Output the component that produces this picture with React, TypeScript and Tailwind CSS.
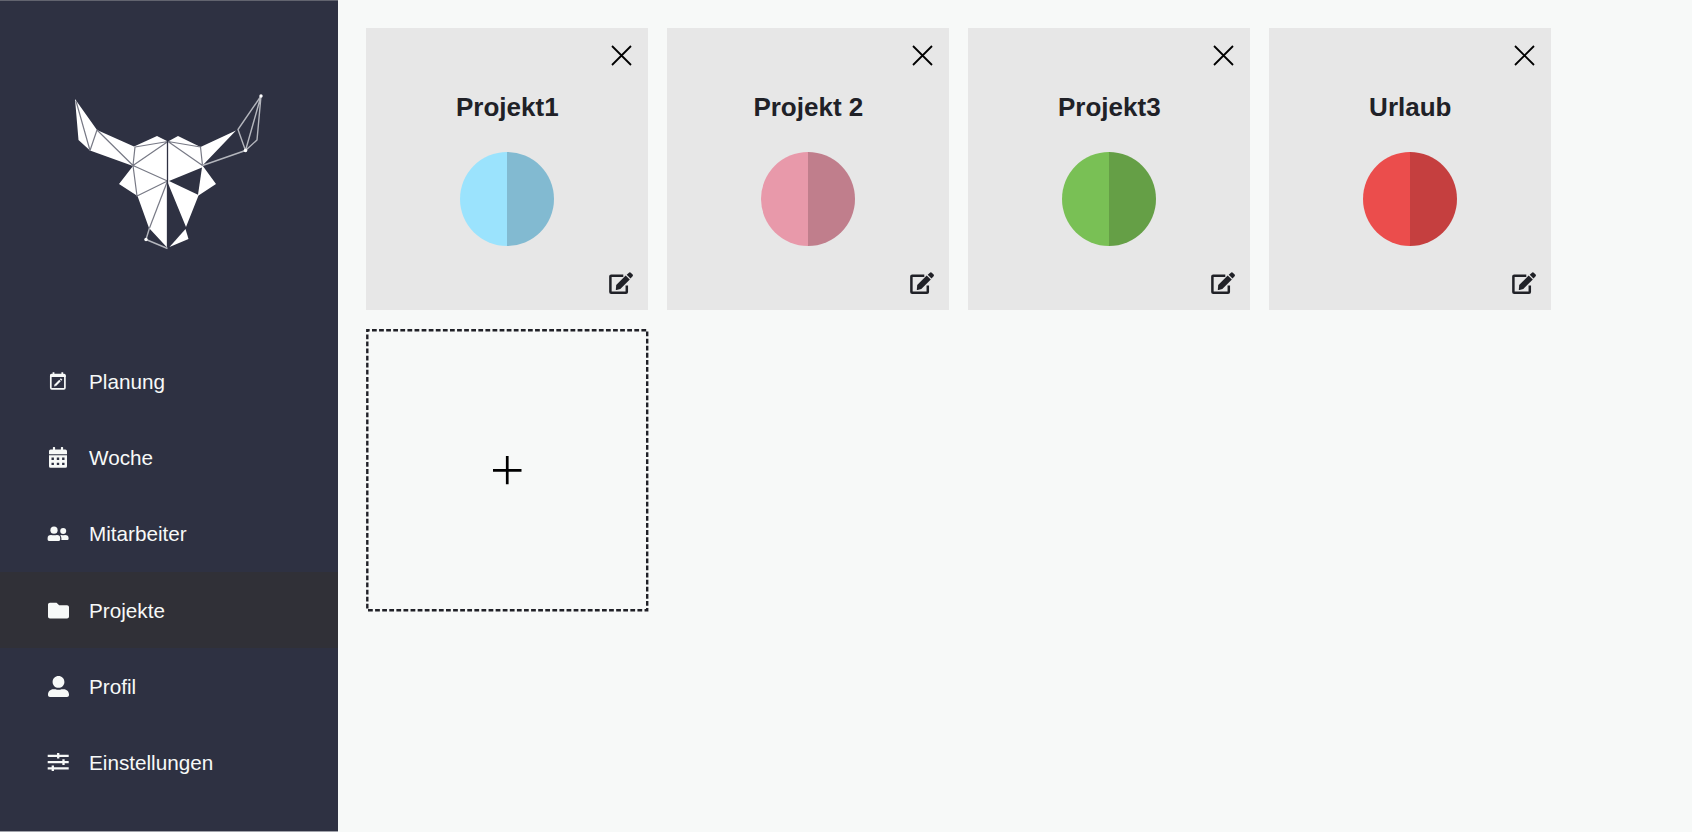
import { FaFolder, FaUserAlt } from "react-icons/fa";

function PlanIcon() {
  return (
    <svg width="22" height="22" viewBox="0 0 22 22" fill="none" className="shrink-0">
      <rect x="3.8" y="5.1" width="14.1" height="13.7" rx="1" stroke="#f7f9f8" strokeWidth="1.7" />
      <path d="M3 7V5.2Q3 3.7 4.5 3.7H5.6V2.2H7.4V3.7H14.4V2.2H16.2V3.7H17.2Q18.7 3.7 18.7 5.2V7Z" fill="#f7f9f8" />
      <path d="M8.3 15.2L13 10.5M13.6 9.9L14.6 8.9" stroke="#f7f9f8" strokeWidth="2.1" />
      <path d="M7.1 16.4L7.5 14.3L9.2 16Z" fill="#f7f9f8" />
    </svg>
  );
}

function CalendarIcon() {
  return (
    <svg width="18" height="21" viewBox="0 0 18 21" fill="currentColor" className="shrink-0">
      <path d="M0 7.2V4.2Q0 2.6 1.6 2.6H3.9V.5Q3.9 0 4.4 0H5.6Q6.1 0 6.1 .5V2.6H11.9V.5Q11.9 0 12.4 0H13.6Q14.1 0 14.1 .5V2.6H16.4Q18 2.6 18 4.2V7.2Z" />
      <path
        fillRule="evenodd"
        d="M0 8.3H18V19.2Q18 20.7 16.5 20.7H1.5Q0 20.7 0 19.2ZM2.5 10.6V12.9H4.9V10.6ZM7.8 10.6V12.9H10.2V10.6ZM13.1 10.6V12.9H15.5V10.6ZM2.5 15.8V18.1H4.9V15.8ZM7.8 15.8V18.1H10.2V15.8ZM13.1 15.8V18.1H15.5V15.8Z"
      />
    </svg>
  );
}

function PeopleIcon() {
  return (
    <svg width="22" height="16" viewBox="0 0 22 16" fill="currentColor" className="shrink-0">
      <circle cx="7" cy="4.2" r="3.6" />
      <path d="M.6 13.6V12.2Q.6 8.9 4 8.9Q7 9.8 10 8.9Q13.2 8.9 13.2 12.2V13.6Q13.2 15 11.8 15H2Q.6 15 .6 13.6Z" />
      <circle cx="16.2" cy="4.9" r="3" />
      <path d="M13.2 9.4Q13.8 8.9 14.5 8.9Q16.2 9.5 18 8.9Q21.6 8.9 21.6 12.2V12.8Q21.6 14 20.4 14H14.4V12.2Q14.4 10.5 13.2 9.4Z" />
    </svg>
  );
}

function SlidersIcon() {
  return (
    <svg width="22" height="18" viewBox="0 0 22 18" fill="none" stroke="currentColor" strokeWidth="2.3" className="shrink-0">
      <path d="M.7 2.8H21.7M.7 9.1H21.7M.7 15.4H21.7M11.2 0V5.6M16.5 6.3V11.9M5.8 12.6V18" />
    </svg>
  );
}

function EditIcon() {
  return (
    <svg width="24" height="23" viewBox="0 0 24 23" fill="none">
      <path d="M14.3 3.7H2.2Q1.4 3.7 1.4 4.5V19.9Q1.4 20.7 2.2 20.7H17Q17.8 20.7 17.8 19.9V13.4" stroke="currentColor" strokeWidth="2.5" />
      <path d="M6.8 18L7.2 13L16.7 3.6L20.8 7.5L11.3 17L7.6 18Z" fill="currentColor" />
      <path d="M17.7 2.8L19.7 .9Q20.9 -.2 22 .9L23.4 2.3Q24.5 3.4 23.4 4.6L21.5 6.6Z" fill="currentColor" />
    </svg>
  );
}

function Logo() {
  return (
    <svg width="338" height="260" viewBox="0 0 338 260" className="shrink-0" strokeLinejoin="round">
      <g fill="#ffffff">
        <path d="M75 99L97 130L134 146.5L157 136L168 141.5L178 136L200.5 147L236 130.5L202.5 165.5L216 184L198.5 195.5L186 227L167.5 182L167.5 248L149 228L137.5 196L119 184L133 166L90 150.5L78.5 140Z" />
        <path d="M185.5 229L188.5 239L169.5 247Z" />
      </g>
      <path d="M169 181L202 167.5L198 194.8Z" fill="#2e3142" />
      <g fill="none" stroke="#777985" strokeWidth="1.2">
        <path d="M76 101L90 150.5L97 130L133 165.5L135 147L168 141.5L133 165.5L167.5 181L137 196L133 165.5" />
        <path d="M168 141.5L200.5 147L202.5 165.5L168 141.5" />
        <path d="M167.5 181L149.5 228" />
      </g>
      <path d="M167.5 141V249" stroke="#2e3142" strokeWidth="1.3" />
      <g fill="none" stroke="#b4b6bd" strokeWidth="1.4">
        <path d="M202.5 165.5L245.5 150.5L257 140L261 96L238 129.5L245.5 150.5L261 96" />
        <path d="M149.5 228L146 239.5L167.5 248.5" />
      </g>
      <g fill="#ffffff">
        <circle cx="261" cy="96" r="1.7" />
        <circle cx="245.5" cy="150.5" r="1.8" />
        <circle cx="146" cy="239.5" r="1.7" />
      </g>
    </svg>
  );
}

const navigation = [
  { label: "Planung", icon: <PlanIcon /> },
  { label: "Woche", icon: <CalendarIcon /> },
  { label: "Mitarbeiter", icon: <PeopleIcon /> },
  { label: "Projekte", icon: <FaFolder size={21} />, active: true },
  { label: "Profil", icon: <FaUserAlt size={21} /> },
  { label: "Einstellungen", icon: <SlidersIcon /> },
];

const projects = [
  { name: "Projekt1", left: "bg-[#9be3fd]", right: "bg-[#82bad1]" },
  { name: "Projekt 2", left: "bg-[#e899aa]", right: "bg-[#c07e8c]" },
  { name: "Projekt3", left: "bg-[#79c055]", right: "bg-[#659f46]" },
  { name: "Urlaub", left: "bg-[#eb4d4c]", right: "bg-[#c53f3f]" },
];

function ProjectCard({ name, left, right }: { name: string; left: string; right: string }) {
  return (
    <article className="flex h-[282.3px] flex-col items-center bg-[#e7e7e7]">
      <button aria-label="Schließen" className="mt-[17px] mr-4 self-end">
        <svg width="21" height="21" viewBox="0 0 21 21" fill="none" stroke="#000000" strokeWidth="1.8">
          <path d="M1 1L20 20M20 1L1 20" />
        </svg>
      </button>
      <h2 className="mt-[21px] text-[26px] leading-[40px] font-bold text-[#202127]">{name}</h2>
      <div className="mt-[25px] flex size-[94px] overflow-hidden rounded-full">
        <div className={`flex-1 ${left}`} />
        <div className={`flex-1 ${right}`} />
      </div>
      <button aria-label="Bearbeiten" className="mt-[26px] mr-[15px] self-end text-[#202127]">
        <EditIcon />
      </button>
    </article>
  );
}

export default function App() {
  return (
    <div className="flex h-[832px] w-[1692px] overflow-hidden bg-[#f7f9f8] font-['Liberation_Sans',Arial,sans-serif]">
      <aside className="flex w-[338px] shrink-0 flex-col border-t border-b border-t-[#62646f] border-b-[#a0a2aa] bg-[#2e3142]">
        <div className="-mt-px h-[343.4px]">
          <Logo />
        </div>
        <nav className="flex flex-col">
          {navigation.map((item) => (
            <a
              key={item.label}
              className={`flex h-[76.2px] items-center pl-[47px] text-[20.7px] text-[#f7f9f8] ${item.active ? "bg-[#303037]" : ""}`}
            >
              <span className="flex w-[22px] justify-center">{item.icon}</span>
              <span className="ml-5">{item.label}</span>
            </a>
          ))}
        </nav>
      </aside>
      <main className="grid h-fit grid-cols-[repeat(4,282.3px)] gap-[18.7px] pt-[28.2px] pl-[28.2px]">
        {projects.map((project) => (
          <ProjectCard key={project.name} {...project} />
        ))}
        <button aria-label="Projekt hinzufügen" className="flex size-[282.5px] items-center justify-center">
          <svg width="282.5" height="282.5" viewBox="0 0 282.5 282.5" fill="none">
            <rect x="1.3" y="1.3" width="279.9" height="279.9" stroke="#202127" strokeWidth="2.4" strokeDasharray="4.76 2.33" strokeDashoffset="2.4" />
            <path d="M127 141.3H155.5M141.25 127V155.3" stroke="#000000" strokeWidth="2.7" />
          </svg>
        </button>
      </main>
    </div>
  );
}
